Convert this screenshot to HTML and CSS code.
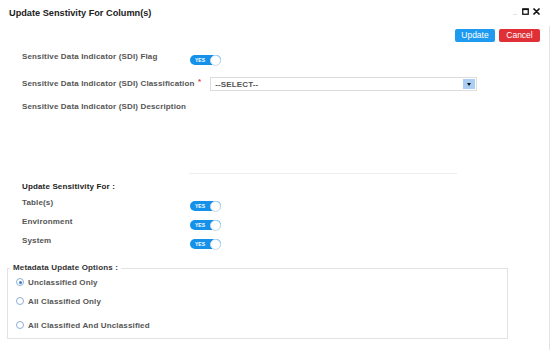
FILE: index.html
```html
<!DOCTYPE html>
<html lang="en">
  <head>
    <meta charset="UTF-8" />
    <meta name="viewport" content="width=device-width, initial-scale=1.0" />
    <title>Update Senstivity For Column(s)</title>
    <link rel="stylesheet" href="styles.css">
  </head>
  <body>
    <div class="dialog">
      <div class="header">
        <span class="title">Update Senstivity For Column(s)</span>
        <div class="window-icons">
          <span class="icon-min"></span>
          <svg class="icon" width="7" height="7" viewBox="0 0 7 7">
            <rect x="0.75" y="1" width="5.5" height="5.25" fill="none" stroke="#111" stroke-width="1.3" />
            <rect x="0.5" y="0.5" width="6" height="1.6" fill="#111" />
          </svg>
          <svg class="icon" width="7" height="7" viewBox="0 0 7 7">
            <path d="M1 1 L6 6 M6 1 L1 6" stroke="#111" stroke-width="1.7" stroke-linecap="round" />
          </svg>
        </div>
      </div>

      <div class="content">
        <div class="actions">
          <button class="btn btn-update">Update</button>
          <button class="btn btn-cancel">Cancel</button>
        </div>

        <div class="form">
          <div class="row row-flag">
            <label>Sensitive Data Indicator (SDI) Flag</label>
            <span class="toggle"><span class="toggle-text">YES</span><span class="knob"></span></span>
          </div>
          <div class="row row-class">
            <label>Sensitive Data Indicator (SDI) Classification</label>
            <span class="req">*</span>
            <div class="select">
              <span class="select-text">--SELECT--</span>
              <span class="select-arrow"><span class="caret"></span></span>
            </div>
          </div>
          <div class="row row-desc">
            <label>Sensitive Data Indicator (SDI) Description</label>
            <div class="desc-area"></div>
          </div>

          <div class="section-title">Update Sensitivity For :</div>
          <div class="row toggle-row">
            <label>Table(s)</label>
            <span class="toggle"><span class="toggle-text">YES</span><span class="knob"></span></span>
          </div>
          <div class="row toggle-row">
            <label>Environment</label>
            <span class="toggle"><span class="toggle-text">YES</span><span class="knob"></span></span>
          </div>
          <div class="row toggle-row">
            <label>System</label>
            <span class="toggle"><span class="toggle-text">YES</span><span class="knob"></span></span>
          </div>
        </div>

        <fieldset class="options">
          <legend>Metadata Update Options :</legend>
          <div class="radio-row first">
            <span class="radio checked"></span>
            <span>Unclassified Only</span>
          </div>
          <div class="radio-row second">
            <span class="radio"></span>
            <span>All Classified Only</span>
          </div>
          <div class="radio-row third">
            <span class="radio"></span>
            <span>All Classified And Unclassified</span>
          </div>
        </fieldset>
      </div>
    </div>
  </body>
</html>
```

FILE: styles.css
```css
body {
  margin: 0;
  padding: 0;
  background-color: white;
  font-family: "Liberation Sans", Arial, sans-serif;
  color: #555;
}
.dialog {
  width: 550px;
  height: 350px;
  overflow: hidden;
}
.header {
  height: 26px;
  display: flex;
  align-items: center;
  justify-content: space-between;
  padding: 0 10px 0 9px;
}
.title {
  font-size: 9.2px;
  font-weight: bold;
  color: #222;
}
.window-icons {
  display: flex;
  align-items: center;
  gap: 4px;
  margin-top: -3px;
}
.icon-min {
  width: 4px;
  height: 1px;
  background-color: #e2e2e2;
  margin-right: 1px;
  margin-top: 5px;
}
.content {
  height: 324px;
  border-right: 1px solid #e4e4e4;
}
.actions {
  display: flex;
  justify-content: flex-end;
  gap: 4px;
  padding-right: 9px;
  padding-top: 3px;
}
.btn {
  height: 13px;
  padding: 0 6px;
  border: none;
  border-radius: 2px;
  color: white;
  font-family: "Liberation Sans", Arial, sans-serif;
  font-size: 8.5px;
  line-height: 13px;
  cursor: pointer;
}
.btn-update {
  background-color: #1e9af0;
  min-width: 40px;
}
.btn-cancel {
  background-color: #df2f37;
  min-width: 41px;
}
.form {
  padding-left: 22px;
}
.row {
  display: flex;
  align-items: flex-start;
}
.row label {
  width: 168px;
  flex: none;
  font-size: 8px;
  font-weight: bold;
  line-height: 12px;
  letter-spacing: 0.15px;
  white-space: nowrap;
}
.row-flag {
  margin-top: 9px;
}
.toggle {
  flex: none;
  width: 31px;
  height: 10px;
  margin-top: 4px;
  border-radius: 5px;
  background-color: #1591ea;
  display: flex;
  align-items: center;
  justify-content: space-between;
}
.toggle-text {
  font-size: 5px;
  font-weight: bold;
  color: white;
  padding-left: 5px;
  line-height: 10px;
}
.knob {
  width: 11px;
  height: 11px;
  box-sizing: border-box;
  border-radius: 50%;
  background-color: white;
  border: 1px solid #c9dbeb;
}
.row-class {
  margin-top: 12px;
  height: 14px;
}
.row-class label {
  line-height: 14px;
}
.req {
  color: #e53935;
  font-size: 8px;
  font-weight: bold;
  margin-left: 8px;
  line-height: 10px;
}
.select {
  margin-left: 9px;
  width: 267px;
  height: 14px;
  box-sizing: border-box;
  border: 1px solid #dcdcdc;
  display: flex;
  align-items: center;
  justify-content: space-between;
  padding: 0 1px 0 4px;
}
.select-text {
  font-size: 8px;
  font-weight: bold;
  letter-spacing: 0.15px;
  color: #555;
}
.select-arrow {
  width: 12px;
  height: 10px;
  background-color: #a9cdf3;
  display: flex;
  align-items: center;
  justify-content: center;
}
.caret {
  width: 0;
  height: 0;
  border-left: 2.5px solid transparent;
  border-right: 2.5px solid transparent;
  border-top: 3px solid #111;
}
.row-desc {
  margin-top: 10px;
}
.desc-area {
  width: 268px;
  height: 73px;
  box-sizing: border-box;
  border-bottom: 1px solid #eeeeee;
  margin-left: -1px;
}
.section-title {
  margin-top: 7px;
  font-size: 8px;
  font-weight: bold;
  line-height: 12px;
  letter-spacing: 0.15px;
  color: #222;
}
.toggle-row {
  height: 19px;
}
.section-title + .toggle-row {
  margin-top: 4px;
}
.options {
  margin: 8px 0 0 7px;
  width: 501px;
  box-sizing: border-box;
  padding: 0 0 7px 2px;
  border: 1px solid #e3e3e3;
}
.options legend {
  padding: 0 3px;
  font-size: 8px;
  font-weight: bold;
  line-height: 12px;
  letter-spacing: 0.15px;
  color: #333;
}
.radio-row {
  display: flex;
  align-items: center;
  height: 12px;
  padding-left: 6px;
  font-size: 8px;
  font-weight: bold;
  letter-spacing: 0.15px;
}
.radio-row.first {
  margin-top: 2px;
}
.radio-row.second {
  margin-top: 7px;
}
.radio-row.third {
  margin-top: 12px;
}
.radio {
  width: 8px;
  height: 8px;
  box-sizing: border-box;
  border: 1px solid #8fb0cf;
  border-radius: 50%;
  margin-right: 4px;
  display: flex;
  align-items: center;
  justify-content: center;
}
.radio.checked::after {
  content: "";
  width: 3px;
  height: 3px;
  border-radius: 50%;
  background-color: #3b7fd0;
}
```
